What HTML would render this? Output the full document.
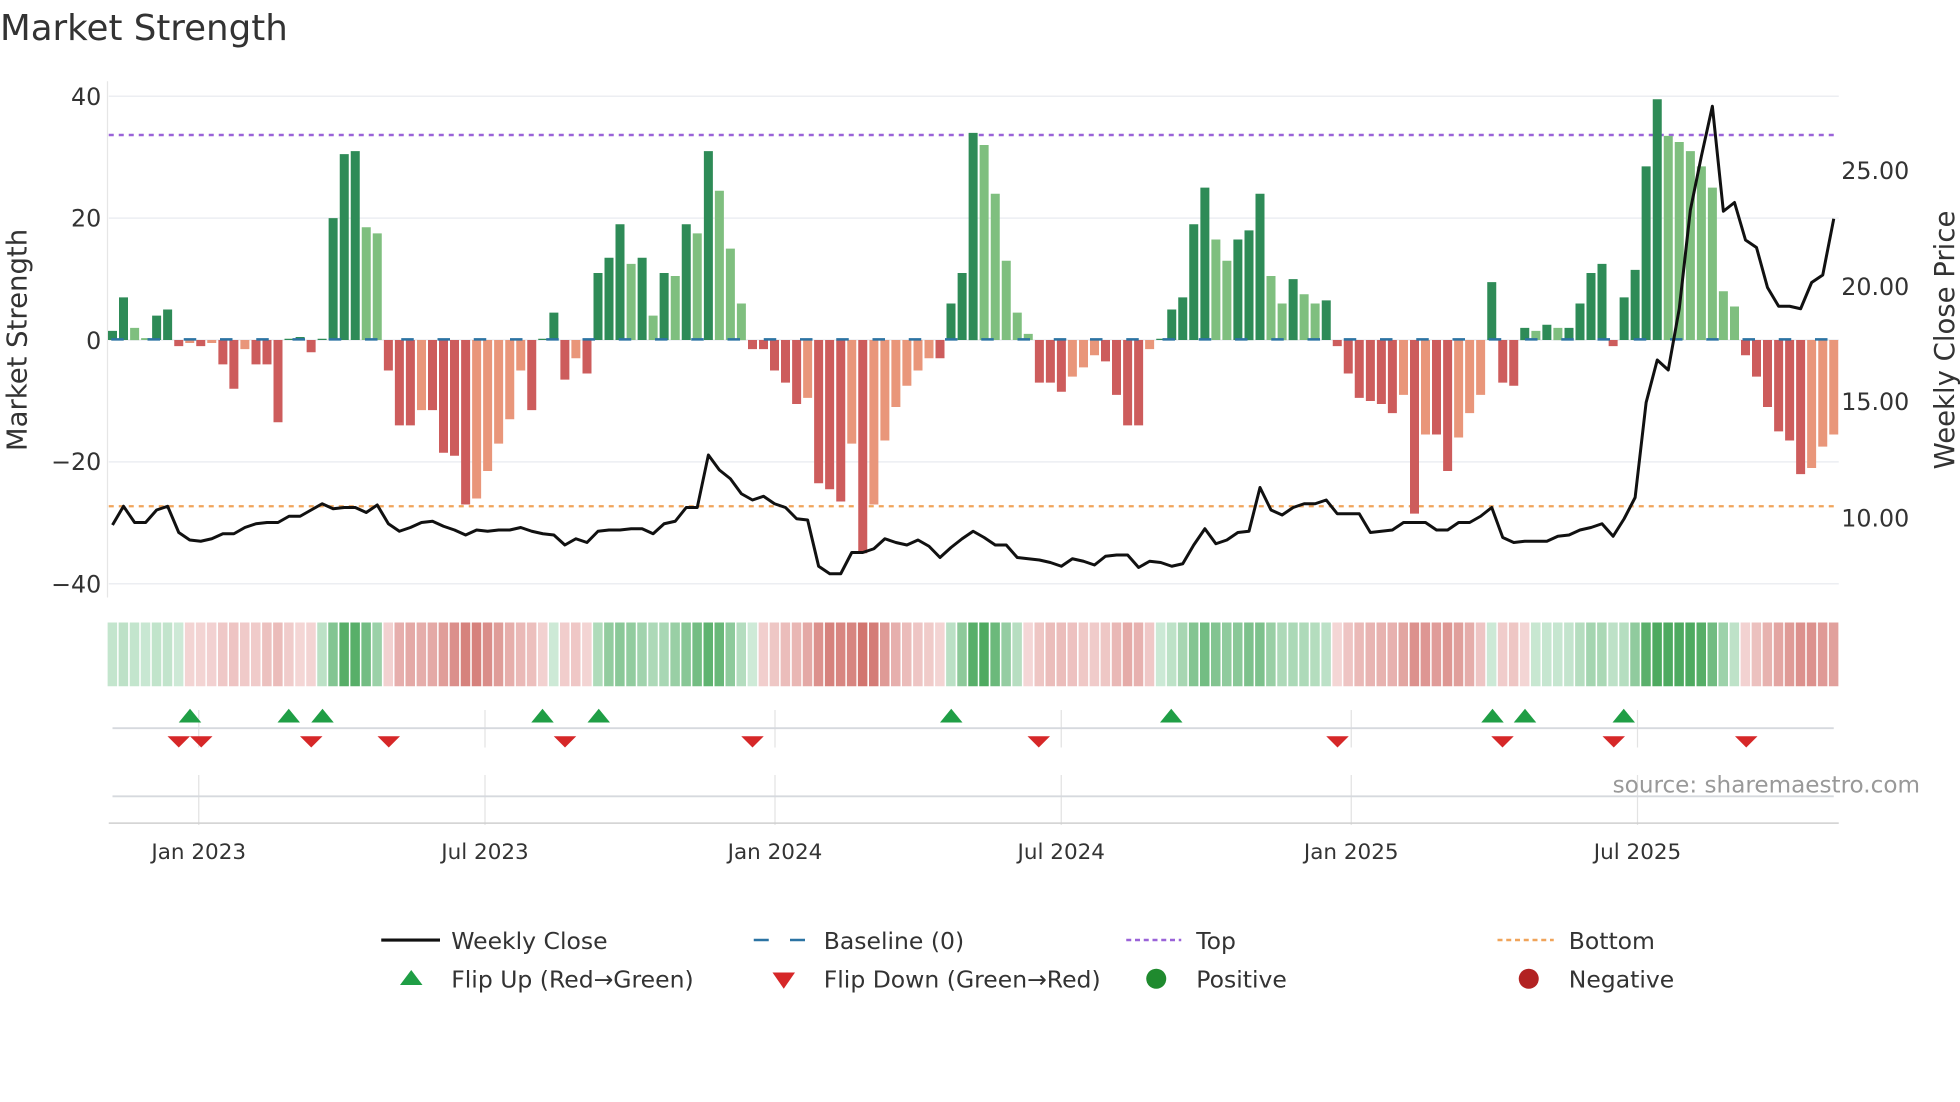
<!DOCTYPE html>
<html><head><meta charset="utf-8"><style>
html,body{margin:0;padding:0;background:#fff;width:1960px;height:1102px;overflow:hidden}
svg{display:block;font-family:"DejaVu Sans","Liberation Sans",sans-serif}
</style></head><body>
<svg id="s" width="1960" height="1102" viewBox="0 0 1568 881.6" xmlns="http://www.w3.org/2000/svg">
<text x="0" y="32" font-size="28.5" fill="#333">Market Strength</text>
<g stroke="#eceef2" stroke-width="1.2">
<line x1="87" x2="1471" y1="77" y2="77"/><line x1="87" x2="1471" y1="174.5" y2="174.5"/><line x1="87" x2="1471" y1="272" y2="272"/><line x1="87" x2="1471" y1="369.5" y2="369.5"/><line x1="87" x2="1471" y1="467" y2="467"/>
</g>
<line x1="86" x2="86" y1="65" y2="478" stroke="#e6e6e6"/>
<g font-size="19" fill="#333" text-anchor="end">
<text x="81" y="84">40</text><text x="81" y="181">20</text><text x="81" y="279">0</text><text x="81" y="376">−20</text><text x="81" y="474">−40</text>
</g>
<g font-size="19" fill="#333">
<text x="1473" y="143">25.00</text><text x="1473" y="236">20.00</text><text x="1473" y="328">15.00</text><text x="1473" y="421">10.00</text>
</g>
<text transform="translate(21,272) rotate(-90)" font-size="22" fill="#333" text-anchor="middle">Market Strength</text>
<text transform="translate(1563,272) rotate(-90)" font-size="22" fill="#333" text-anchor="middle">Weekly Close Price</text>
<line x1="87" x2="1471" y1="108" y2="108" stroke="#9a63d8" stroke-width="2" stroke-dasharray="4,4"/>
<line x1="87" x2="1471" y1="405" y2="405" stroke="#f0a45a" stroke-width="1.8" stroke-dasharray="4,4"/>
<g id="bars"></g>
<line x1="87" x2="1471" y1="271.5" y2="271.5" stroke="#2b73a3" stroke-width="2" stroke-dasharray="10,19" stroke-dashoffset="-2"/>
<polyline id="price" fill="none" stroke="#111" stroke-width="2.4" stroke-linejoin="round" points=""/>
<g id="heat"></g>
<g stroke="#e3e3e3" stroke-width="1">
<line x1="159" x2="159" y1="568" y2="598"/><line x1="388" x2="388" y1="568" y2="598"/><line x1="620" x2="620" y1="568" y2="598"/><line x1="849" x2="849" y1="568" y2="598"/><line x1="1081" x2="1081" y1="568" y2="598"/><line x1="1310" x2="1310" y1="568" y2="598"/>
<line x1="159" x2="159" y1="620" y2="660"/><line x1="388" x2="388" y1="620" y2="660"/><line x1="620" x2="620" y1="620" y2="660"/><line x1="849" x2="849" y1="620" y2="660"/><line x1="1081" x2="1081" y1="620" y2="660"/><line x1="1310" x2="1310" y1="620" y2="660"/>
</g>
<line x1="90" x2="1467" y1="582.5" y2="582.5" stroke="#d6d9de" stroke-width="1.5"/>
<line x1="90" x2="1467" y1="637" y2="637" stroke="#d6d9de" stroke-width="1.5"/>
<line x1="87" x2="1471" y1="658.5" y2="658.5" stroke="#cfcfcf" stroke-width="1.2"/>
<g id="flips"></g>
<text x="1536" y="634" font-size="18.5" fill="#999" text-anchor="end">source: sharemaestro.com</text>
<g font-size="17.2" fill="#333" text-anchor="middle">
<text x="159" y="687">Jan 2023</text><text x="388" y="687">Jul 2023</text><text x="620" y="687">Jan 2024</text><text x="849" y="687">Jul 2024</text><text x="1081" y="687">Jan 2025</text><text x="1310" y="687">Jul 2025</text>
</g>
<g font-size="18.8" fill="#333">
<line x1="305" x2="352" y1="752" y2="752" stroke="#111" stroke-width="2.5"/>
<text x="361" y="759">Weekly Close</text>
<line x1="603" x2="645" y1="752" y2="752" stroke="#2b73a3" stroke-width="2" stroke-dasharray="12,17"/>
<text x="659" y="759">Baseline (0)</text>
<line x1="901" x2="945" y1="752" y2="752" stroke="#9a63d8" stroke-width="2" stroke-dasharray="4,3"/>
<text x="957" y="759">Top</text>
<line x1="1198" x2="1243" y1="752" y2="752" stroke="#f0a45a" stroke-width="2" stroke-dasharray="4,3"/>
<text x="1255" y="759">Bottom</text>
<polygon points="320,788 329,776 338,788" fill="#1f9e45"/>
<text x="361" y="790">Flip Up (Red→Green)</text>
<polygon points="618,778 636,778 627,791" fill="#d62728"/>
<text x="659" y="790">Flip Down (Green→Red)</text>
<circle cx="925" cy="783" r="8" fill="#1f8a2e"/>
<text x="957" y="790">Positive</text>
<circle cx="1223" cy="783" r="8" fill="#b22222"/>
<text x="1255" y="790">Negative</text>
</g>
</svg>
<script>
(function(){
var NS="http://www.w3.org/2000/svg";
function el(parent,tag,attrs){var e=document.createElementNS(NS,tag);for(var k in attrs){e.setAttribute(k,attrs[k]);}parent.appendChild(e);return e;}
var V=[1.5,7,2,0.3,4,5,-1,-0.5,-1,-0.5,-4,-8,-1.5,-4,-4,-13.5,0.2,0.5,-2,0.2,20,30.5,31,18.5,17.5,-5,-14,-14,-11.5,-11.5,-18.5,-19,-27,-26,-21.5,-17,-13,-5,-11.5,0.2,4.5,-6.5,-3,-5.5,11,13.5,19,12.5,13.5,4,11,10.5,19,17.5,31,24.5,15,6,-1.5,-1.5,-5,-7,-10.5,-9.5,-23.5,-24.5,-26.5,-17,-35,-27,-16.5,-11,-7.5,-5,-3,-3,6,11,34,32,24,13,4.5,1,-7,-7,-8.5,-6,-4.5,-2.5,-3.5,-9,-14,-14,-1.5,0.2,5,7,19,25,16.5,13,16.5,18,24,10.5,6,10,7.5,6,6.5,-1,-5.5,-9.5,-10,-10.5,-12,-9,-28.5,-15.5,-15.5,-21.5,-16,-12,-9,9.5,-7,-7.5,2,1.5,2.5,2,2,6,11,12.5,-1,7,11.5,28.5,39.5,33.5,32.5,31,28.5,25,8,5.5,-2.5,-6,-11,-15,-16.5,-22,-21,-17.5,-15.5];
var P=[420,405,418,418,408,405,426,432,433,431,427,427,422,419,418,418,413,413,408,403,407,406,406,410,404,419,425,422,418,417,421,424,428,424,425,424,424,422,425,427,428,436,431,434,425,424,424,423,423,427,419,417,406,406,364,376,383,395,400,397,403,406,415,416,453,459,459,442,442,439,431,434,436,432,437,446,438,431,425,430,436,436,446,447,448,450,453,447,449,452,445,444,444,454,449,450,453,451,436,423,435,432,426,425,390,408,412,406,403,403,400,411,411,411,426,425,424,418,418,418,424,424,418,418,413,406,430,434,433,433,433,429,428,424,422,419,429,415,398,322,288,296,247,168,125,85,169,162,192,198,230,245,245,247,226,220,175];
var n=V.length,x0=90,dx=(1467-90)/(n-1),pts=[];
var gb=document.getElementById("bars"),gh=document.getElementById("heat"),gf=document.getElementById("flips");
function mix(a,c,t){var r=[];for(var i=0;i<3;i++){r.push(Math.round(a[i]+(c[i]-a[i])*t));}return "rgb("+r.join(",")+")";}
for(var i=0;i<n;i++){
 var v=V[i],x=x0+i*dx,pv=i?V[i-1]:0,col;
 if(v>=0){col=(v>=pv)?"#2e8b57":"#7fbf7f";}else{col=(v<=pv)?"#cd5c5c":"#e9967a";}
 var y=272-v*4.875,top=Math.min(y,272),ht=Math.abs(v*4.875);
 el(gb,"rect",{x:(x-3.6).toFixed(1),y:top.toFixed(1),width:"7.2",height:ht.toFixed(1),fill:col});
 var s=(V[Math.max(0,i-1)]+2*v+V[Math.min(n-1,i+1)])/4,t=Math.min(1,Math.abs(s)/30);t=0.1+0.9*t;
 var c=s>=0?mix([222,242,230],[78,170,96],t):mix([248,226,226],[208,112,106],t);
 el(gh,"rect",{x:(x-3.9).toFixed(1),y:"498",width:"7.6",height:"51",fill:c});
 pts.push(x.toFixed(1)+","+P[i]);
}
document.getElementById("price").setAttribute("points",pts.join(" "));
var up=[152,231,258,434,479,761,937,1194,1220,1299],dn=[143,161,249,311,452,602,831,1070,1202,1291,1397];
for(var j=0;j<up.length;j++){var ux=up[j];el(gf,"polygon",{points:(ux-9)+",578 "+ux+",567 "+(ux+9)+",578",fill:"#1f9e45"});}
for(var k=0;k<dn.length;k++){var dxx=dn[k];el(gf,"polygon",{points:(dxx-9)+",589 "+(dxx+9)+",589 "+dxx+",598",fill:"#d62728"});}
})();
</script>
</body></html>
